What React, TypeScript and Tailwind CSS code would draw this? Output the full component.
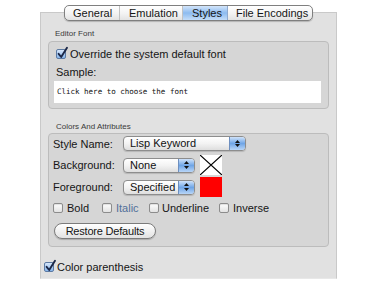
import React from "react";

function Check({ checked = false }: { checked?: boolean }) {
  return (
    <div
      className={
        checked
          ? "relative w-[10px] h-[10px] shrink-0 rounded-[2px] border border-[#5c7aa3] bg-linear-to-b from-[#d6e6fa] to-[#86b5ec]"
          : "relative w-[10px] h-[10px] shrink-0 rounded-[2px] border border-[#8c8c8c] bg-linear-to-b from-white to-[#e2e2e2] shadow-[inset_0_1px_1px_rgba(0,0,0,0.12)]"
      }
    >
      {checked && (
        <svg
          className="absolute left-[0px] top-[-3px] overflow-visible"
          width="11"
          height="12"
          viewBox="0 0 11 12"
        >
          <path
            d="M1.6 6.8 L4.2 10 L10 0.8"
            fill="none"
            stroke="#1b2747"
            strokeWidth="1.9"
            strokeLinecap="round"
            strokeLinejoin="round"
          />
        </svg>
      )}
    </div>
  );
}

function Popup({ label, w }: { label: string; w: string }) {
  return (
    <div
      className={`${w} flex h-[15px] rounded-[4px] border border-[#8d8d8d] bg-linear-to-b from-white via-[#f3f3f3] to-[#dedede] shadow-[0_1px_1px_rgba(0,0,0,0.15)] overflow-hidden`}
    >
      <div className="flex-1 pl-[6px] text-[11px] leading-[13px] text-[#111]">{label}</div>
      <div className="w-[16px] border-l border-[#6e8fbf] bg-linear-to-b from-[#cfe2f9] via-[#6fa5e6] to-[#b9d6f7] flex flex-col items-center justify-center gap-[1.5px]">
        <svg width="5" height="3" viewBox="0 0 5 3">
          <path d="M2.5 0 L5 3 L0 3 Z" fill="#111" />
        </svg>
        <svg width="5" height="3" viewBox="0 0 5 3">
          <path d="M0 0 L5 0 L2.5 3 Z" fill="#111" />
        </svg>
      </div>
    </div>
  );
}

export default function App() {
  return (
    <div className="w-[379px] h-[287px] bg-white overflow-hidden font-['Liberation_Sans',Arial,sans-serif] text-[#151515]">
      <div className="pt-[5px]">
        {/* Tabs */}
        <div className="relative z-10 ml-[64px] flex w-fit h-[16px] rounded-[5px] border border-[#7f7f7f] bg-linear-to-b from-white via-[#f4f4f4] to-[#e3e3e3] shadow-[0_1px_1px_rgba(0,0,0,0.2)] overflow-hidden text-[11px] leading-[14px]">
          <div className="w-[55px] pl-[8px] border-r border-[#c2c2c2]">General</div>
          <div className="w-[63px] pl-[9px] border-r border-[#c2c2c2]">Emulation</div>
          <div className="w-[45px] pl-[9px] border-r border-[#8ea9cf] bg-linear-to-b from-[#d3e5fa] via-[#8dbbef] to-[#c4ddf8]">Styles</div>
          <div className="w-[84px] pl-[8px]">File Encodings</div>
        </div>

        {/* Panel */}
        <div className="-mt-[9px] ml-[40px] w-[297px] h-[267px] bg-[#e1e1e1] border border-[#c9c9c9] border-b-[#e8e8e8] flex flex-col">
          <div className="mt-[16px] pl-[14px] h-[10px] text-[8px] leading-[10px] text-[#3a3a3a]">Editor Font</div>

          <div className="mt-[2px] ml-[7px] w-[281px] h-[68px] rounded-[4px] border border-[#bcbcbc] bg-[#d6d6d6] flex flex-col">
            <div className="mt-[6px] pl-[7px] h-[12px] flex items-center gap-[4px]">
              <Check checked />
              <span className="text-[11px] leading-[12px]">Override the system default font</span>
            </div>
            <div className="mt-[6px] pl-[7px] h-[12px] text-[11px] leading-[12px]">Sample:</div>
            <div className="mt-[3px] ml-[5px] w-[267px] h-[22px] bg-white flex items-center pl-[3px]">
              <span className="font-['DejaVu_Sans_Mono','Liberation_Mono',monospace] text-[7.5px] leading-[10px] text-[#111]">
                Click here to choose the font
              </span>
            </div>
          </div>

          <div className="mt-[13px] pl-[15px] h-[10px] text-[8px] leading-[10px] text-[#3a3a3a]">Colors And Attributes</div>

          <div className="mt-[1px] ml-[7px] w-[281px] h-[114px] rounded-[4px] border border-[#bcbcbc] bg-[#d6d6d6] flex flex-col">
            <div className="mt-[2px] pl-[4px] h-[15px] flex items-center">
              <span className="w-[70px] text-[11px] leading-[12px]">Style Name:</span>
              <Popup label="Lisp Keyword" w="w-[123px]" />
            </div>
            <div className="mt-[4px] pl-[4px] h-[20px] flex items-center">
              <span className="w-[70px] text-[11px] leading-[12px]">Background:</span>
              <Popup label="None" w="w-[72px]" />
              <div className="ml-[5px] w-[22px] h-[20px] bg-white">
                <svg width="22" height="20" viewBox="0 0 22 20">
                  <path d="M0 0 L22 20 M22 0 L0 20" stroke="#000" strokeWidth="1.2" />
                </svg>
              </div>
            </div>
            <div className="mt-[2px] pl-[4px] h-[20px] flex items-center">
              <span className="w-[70px] text-[11px] leading-[12px]">Foreground:</span>
              <Popup label="Specified" w="w-[72px]" />
              <div className="ml-[5px] w-[22px] h-[20px] bg-[#ff0000]" />
            </div>
            <div className="mt-[5px] pl-[4px] h-[12px] flex items-center text-[11px] leading-[12px]">
              <div className="w-[49px] flex items-center gap-[4px]">
                <Check />
                <span>Bold</span>
              </div>
              <div className="w-[47px] flex items-center gap-[4px]">
                <Check />
                <span className="text-[#52709a]">Italic</span>
              </div>
              <div className="w-[70px] flex items-center gap-[3px]">
                <Check />
                <span>Underline</span>
              </div>
              <div className="flex items-center gap-[4px]">
                <Check />
                <span>Inverse</span>
              </div>
            </div>
            <div className="mt-[9px] ml-[5px] w-[102px] h-[16px] rounded-full border border-[#7b7b7b] bg-linear-to-b from-white via-[#f1f1f1] to-[#e2e2e2] shadow-[0_1px_1px_rgba(0,0,0,0.2)] flex items-center justify-center text-[11px] leading-[12px] tracking-[-0.2px]">
              Restore Defaults
            </div>
          </div>

          <div className="mt-[14px] pl-[3px] h-[12px] flex items-center gap-[3px]">
            <Check checked />
            <span className="text-[11px] leading-[12px]">Color parenthesis</span>
          </div>
        </div>
      </div>
    </div>
  );
}
